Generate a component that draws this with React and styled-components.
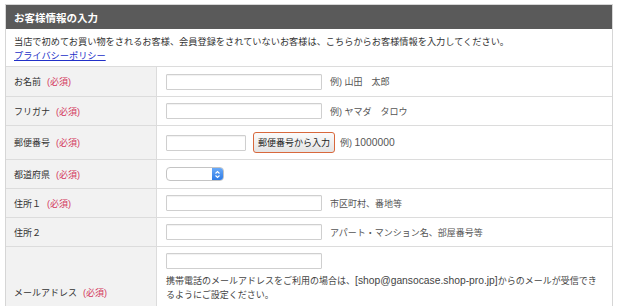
import React from 'react'
import styled, { createGlobalStyle } from 'styled-components'

const GlobalStyle = createGlobalStyle`
  body {
    margin: 0;
    background: #ffffff;
    font-family: "Liberation Sans", "Noto Sans CJK JP", sans-serif;
    color: #333333;
  }
`

const Box = styled.section`
  box-sizing: border-box;
  width: 608px;
  margin: 4px 0 0 5px;
  border: 1px solid #d6d6d6;
  border-bottom: none;
`

const Heading = styled.h2`
  margin: 0;
  height: 24px;
  padding: 0 8px;
  display: flex;
  align-items: center;
  background: #5a5a5a;
  color: #ffffff;
  font-size: 10.5px;
  font-weight: bold;
`

const Intro = styled.div`
  padding: 7px 8px 3px;
  font-size: 9.2px;
  line-height: 13.5px;
  p {
    margin: 0;
  }
  a {
    color: #2230c8;
    text-decoration: underline;
  }
`

const Row = styled.div`
  display: grid;
  grid-template-columns: 151px 1fr;
  border-top: 1px solid #dcdcdc;
  min-height: ${(p) => p.$height || 28}px;
`

const Label = styled.div`
  display: flex;
  align-items: center;
  padding: 0 8px;
  background: #f2f2f2;
  border-right: 1px solid #dcdcdc;
  font-size: 9px;
  color: #333333;
`

const Required = styled.span`
  color: #d3365b;
  margin-left: 6px;
`

const Field = styled.div`
  display: flex;
  align-items: ${(p) => (p.$stack ? 'flex-start' : 'center')};
  flex-direction: ${(p) => (p.$stack ? 'column' : 'row')};
  padding: ${(p) => (p.$stack ? '6px 8px 14px 9px' : '0 6px 0 9px')};
  gap: ${(p) => (p.$stack ? '0' : '8px')};
  font-size: 9px;
`

const Input = styled.input`
  box-sizing: border-box;
  width: ${(p) => p.$width || 156}px;
  height: 16px;
  margin: 0;
  padding: 0 3px;
  border: 1px solid #cfcfcf;
  border-radius: 1px;
  box-shadow: inset 0 1px 1px rgba(0, 0, 0, 0.06);
  background: #ffffff;
`

const Example = styled.span`
  color: #555555;
  font-size: 9px;
`

const Latin = styled.span`
  font-size: 10.3px;
  line-height: 1;
`

const ZipButton = styled.button`
  box-sizing: border-box;
  height: 21px;
  margin: 0 -3px 0 -1px;
  padding: 0 4px;
  border: 1.5px solid #d8683c;
  border-radius: 3px;
  background: linear-gradient(#fbfbfb, #e4e4e4);
  font-family: inherit;
  font-size: 9px;
  color: #222222;
`

const Select = styled.div`
  box-sizing: border-box;
  display: flex;
  width: 58px;
  height: 14px;
  border: 1px solid #c4c4c4;
  border-radius: 4px;
  overflow: hidden;
  background: #ffffff;
`

const SelectValue = styled.div`
  flex: 1;
`

const SelectArrows = styled.div`
  width: 11px;
  display: flex;
  align-items: center;
  justify-content: center;
  background: linear-gradient(#6aaaf8, #2d7be6);
`

const Note = styled.p`
  margin: 5px 0 6px;
  font-size: 9px;
  line-height: 14px;
  color: #444444;
`

const ArrowsIcon = () => (
  <svg width='7' height='9' viewBox='0 0 7 9'>
    <path d='M1.5 3.5 L3.5 1.5 L5.5 3.5 M1.5 5.5 L3.5 7.5 L5.5 5.5' fill='none' stroke='#ffffff' strokeWidth='1.1' />
  </svg>
)

const App = () => {
  return (
    <>
      <GlobalStyle />
      <Box>
        <Heading>お客様情報の入力</Heading>
        <Intro>
          <p>当店で初めてお買い物をされるお客様、会員登録をされていないお客様は、こちらからお客様情報を入力してください。</p>
          <a href='#privacy'>プライバシーポリシー</a>
        </Intro>
        <Row $height={29}>
          <Label>
            お名前<Required>(必須)</Required>
          </Label>
          <Field>
            <Input />
            <Example>例) 山田　太郎</Example>
          </Field>
        </Row>
        <Row>
          <Label>
            フリガナ<Required>(必須)</Required>
          </Label>
          <Field>
            <Input />
            <Example>例) ヤマダ　タロウ</Example>
          </Field>
        </Row>
        <Row $height={33}>
          <Label>
            郵便番号<Required>(必須)</Required>
          </Label>
          <Field>
            <Input $width={80} />
            <ZipButton type='button'>郵便番号から入力</ZipButton>
            <Example>
              例) <Latin>1000000</Latin>
            </Example>
          </Field>
        </Row>
        <Row>
          <Label>
            都道府県<Required>(必須)</Required>
          </Label>
          <Field>
            <Select>
              <SelectValue />
              <SelectArrows>
                <ArrowsIcon />
              </SelectArrows>
            </Select>
          </Field>
        </Row>
        <Row>
          <Label>
            住所１<Required>(必須)</Required>
          </Label>
          <Field>
            <Input />
            <Example>市区町村、番地等</Example>
          </Field>
        </Row>
        <Row>
          <Label>住所２</Label>
          <Field>
            <Input />
            <Example>アパート・マンション名、部屋番号等</Example>
          </Field>
        </Row>
        <Row>
          <Label>
            メールアドレス<Required>(必須)</Required>
          </Label>
          <Field $stack>
            <Input />
            <Note>
              携帯電話のメールアドレスをご利用の場合は、<Latin>[shop@gansocase.shop-pro.jp]</Latin>からのメールが受信できるようにご設定ください。
            </Note>
            <Input />
          </Field>
        </Row>
      </Box>
    </>
  )
}

export default App
